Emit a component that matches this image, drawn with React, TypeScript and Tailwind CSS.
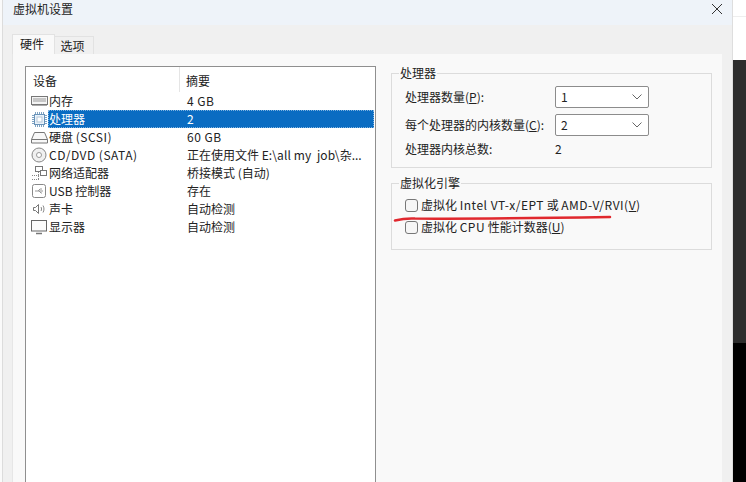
import React from "react";

const font = { fontFamily: '"Noto Sans CJK SC", "Noto Sans", sans-serif' };

const Ico = ({ children }: { children: React.ReactNode }) => (
  <svg width="17" height="16" viewBox="0 0 17 16" fill="none" className="shrink-0">
    {children}
  </svg>
);

const L = ({ children }: { children: React.ReactNode }) => (
  <span className="tracking-[0.5px]">{children}</span>
);

const icons: Record<string, React.ReactNode> = {
  mem: (
    <Ico>
      <rect x="0.5" y="3.5" width="16" height="8" fill="#f4f4f4" stroke="#777" />
      <path d="M2 6h13M2 8h13" stroke="#999" />
      <path d="M1 12.5h15" stroke="#aaa" />
    </Ico>
  ),
  cpu: (
    <Ico>
      <rect x="3.5" y="3.5" width="10" height="10" fill="#eaf3fb" stroke="#6a93b8" />
      <rect x="6" y="6" width="5" height="5" fill="#fff" stroke="#b5c7d8" />
      <path d="M4.500 1v2M6.500 1v2M8.500 1v2M10.500 1v2M12.500 1v2M4.500 14v2M6.500 14v2M8.500 14v2M10.500 14v2M12.500 14v2M1 4.500h2M1 6.500h2M1 8.500h2M1 10.500h2M1 12.500h2M14 4.500h2M14 6.500h2M14 8.500h2M14 10.500h2M14 12.500h2" stroke="#7fa4c4" />
    </Ico>
  ),
  disk: (
    <Ico>
      <path d="M3.5 3.5h10l3 7v3.5h-16v-3.5z" fill="#f8f8f8" stroke="#777" />
      <path d="M0.5 10.5h16" stroke="#777" />
    </Ico>
  ),
  cd: (
    <Ico>
      <circle cx="8" cy="8" r="7" fill="#f0f0f0" stroke="#888" />
      <circle cx="8" cy="8" r="2.5" fill="#fff" stroke="#999" />
    </Ico>
  ),
  net: (
    <Ico>
      <rect x="4.500" y="1.500" width="7" height="5" fill="#fff" stroke="#777" />
      <rect x="9.500" y="5.500" width="6" height="5" fill="#fff" stroke="#777" />
      <path d="M7.500 7v7M1 10.500h8M1 14.500h7" stroke="#888" strokeDasharray="1 1" />
    </Ico>
  ),
  usb: (
    <Ico>
      <rect x="1.500" y="1.500" width="13" height="13" rx="2" fill="#fff" stroke="#888" />
      <path d="M4 8h8M7 8l2-2h2M8 8l2 2h1" stroke="#999" />
    </Ico>
  ),
  snd: (
    <Ico>
      <path d="M2.500 6.500h2l3-3v9l-3-3h-2z" fill="#fff" stroke="#777" />
      <path d="M10 6c.7 1 .7 3 0 4M12 4.500c1.300 2 1.300 5 0 7" stroke="#888" />
    </Ico>
  ),
  mon: (
    <Ico>
      <rect x="0.500" y="1.500" width="15" height="10.500" fill="#fbfbfb" stroke="#666" />
      <path d="M5 14.500h6" stroke="#777" strokeWidth="1.500" />
    </Ico>
  ),
};

const rows: [string, React.ReactNode, React.ReactNode][] = [
  ["mem", "内存", <L>4 GB</L>],
  ["cpu", "处理器", "2"],
  ["disk", <>硬盘 <L>(SCSI)</L></>, <L>60 GB</L>],
  ["cd", <L>CD/DVD (SATA)</L>, <>正在使用文件 <span className="tracking-[0.1px]">E:\all my  job\</span>杂...</>],
  ["net", "网络适配器", "桥接模式 (自动)"],
  ["usb", "USB 控制器", "存在"],
  ["snd", "声卡", "自动检测"],
  ["mon", "显示器", "自动检测"],
];

const Select = ({ value }: { value: string }) => (
  <div className="w-[94px] h-[22px] bg-white border border-[#8c8c8c] rounded-[2px] flex items-center justify-between pl-[5px] pr-[5px]">
    <span>{value}</span>
    <svg width="12" height="8" viewBox="0 0 12 8" fill="none">
      <path d="M1.500 1.500L6 6l4.500-4.500" stroke="#666" />
    </svg>
  </div>
);

const Check = ({ children }: { children: React.ReactNode }) => (
  <div className="flex items-center h-[22px]">
    <span className="w-[13px] h-[13px] border border-[#777] rounded-[3px] bg-[#f6f6f6] mr-[3px] shrink-0" />
    <span className="whitespace-pre">{children}</span>
  </div>
);

export default function App() {
  return (
    <div className="w-[746px] h-[482px] overflow-hidden flex bg-white text-[12px] leading-[18px] text-[#222]" style={font}>
      <div className="w-[3px] shrink-0 bg-[#fafafa] border-r border-[#dcdcdc]" />
      <div className="w-[730px] shrink-0 flex flex-col bg-[#f0f0f0] border-r border-[#dedede]">
        <div className="h-[25px] shrink-0 bg-[#eef3f9] flex items-center justify-between pl-[10px] pr-[9px] pb-[7px]">
          <span>虚拟机设置</span>
          <svg width="12" height="12" viewBox="0 0 12 12" fill="none">
            <path d="M1 1l10 10M11 1L1 11" stroke="#333" />
          </svg>
        </div>
        <div className="h-[29px] shrink-0 flex items-end pl-[9px]">
          <div className="w-[43px] h-[20px] bg-[#f9f9f9] border border-b-0 border-[#e2e2e2] flex items-center justify-center pb-[2px] pr-[3px]">硬件</div>
          <div className="w-[39px] h-[18px] bg-[#f0f0f0] border border-l-0 border-b-0 border-[#e2e2e2] flex items-center justify-center pr-[3px]">选项</div>
        </div>
        <div className="flex-1 ml-[9px] mr-[10px] bg-[#f9f9f9] border-l border-[#e6e6e6] flex pl-[12px] pt-[12px] min-h-0">
          <div className="w-[351px] shrink-0 bg-white border border-b-0 border-[#8f8f8f] flex flex-col">
            <div className="h-[25px] shrink-0 flex items-center">
              <div className="w-[154px] pl-[7px] pt-[2px] h-full flex items-center border-r border-[#e5e5e5]">设备</div>
              <div className="pl-[6px] pt-[2px]">摘要</div>
            </div>
            {rows.map(([ic, name, val]) => {
              const sel = ic === "cpu";
              return (
                <div key={ic} className="h-[18px] shrink-0 flex items-center pl-[5px] pr-[1px]">
                  {icons[ic]}
                  <div className={"flex-1 h-full flex items-center pl-[1px] whitespace-pre " + (sel ? "bg-[#0a6cc2] text-white outline-1 outline-dotted outline-[#7fb3e0] -outline-offset-1" : "")}>
                    <span className="w-[138px] shrink-0">{name}</span>
                    <span>{val}</span>
                  </div>
                </div>
              );
            })}
          </div>
          <div className="w-[321px] ml-[15px] shrink-0 flex flex-col relative">
            <fieldset className="h-[102px] border border-[#dcdcdc] pl-[13px] pr-[10px]">
              <legend className="ml-[-6px] px-[1px] leading-[14px]">处理器</legend>
              <div className="flex items-center h-[22px] mt-[6px]">
                <span className="w-[150px]">处理器数量(<u>P</u>):</span>
                <Select value="1" />
              </div>
              <div className="flex items-center h-[22px] mt-[6px]">
                <span className="w-[150px]">每个处理器的内核数量(<u>C</u>):</span>
                <Select value="2" />
              </div>
              <div className="flex items-center h-[18px] mt-[4px]">
                <span className="w-[150px]">处理器内核总数:</span>
                <span>2</span>
              </div>
            </fieldset>
            <fieldset className="h-[74px] border border-[#dcdcdc] mt-[8px] pl-[13px]">
              <legend className="ml-[-6px] px-[1px] leading-[14px]">虚拟化引擎</legend>
              <div className="mt-[4px]">
                <Check>
                  虚拟化 <L>Intel VT-x/EPT</L> 或 <L>AMD-V/RVI(<u>V</u>)</L>
                </Check>
                <Check>
                  虚拟化 <L>CPU</L> 性能计数器(<u>U</u>)
                </Check>
              </div>
            </fieldset>
            <svg className="absolute left-0 top-[144px]" width="225" height="12" viewBox="0 0 225 12" fill="none">
              <path d="M4 10.500C10 9 14 8 24 8.500C70 9 120 8.500 219 7" stroke="#e0282e" strokeWidth="2.500" strokeLinecap="round" />
            </svg>
          </div>
        </div>
      </div>
      <div className="flex-1 flex flex-col">
        <div className="h-[60px] shrink-0 bg-white">
          <div className="h-[17px] border-b border-[#eeeeee]" />
        </div>
        <div className="h-[283px] shrink-0 bg-[#2d2d2d]" />
        <div className="flex-1 bg-black" />
      </div>
    </div>
  );
}
